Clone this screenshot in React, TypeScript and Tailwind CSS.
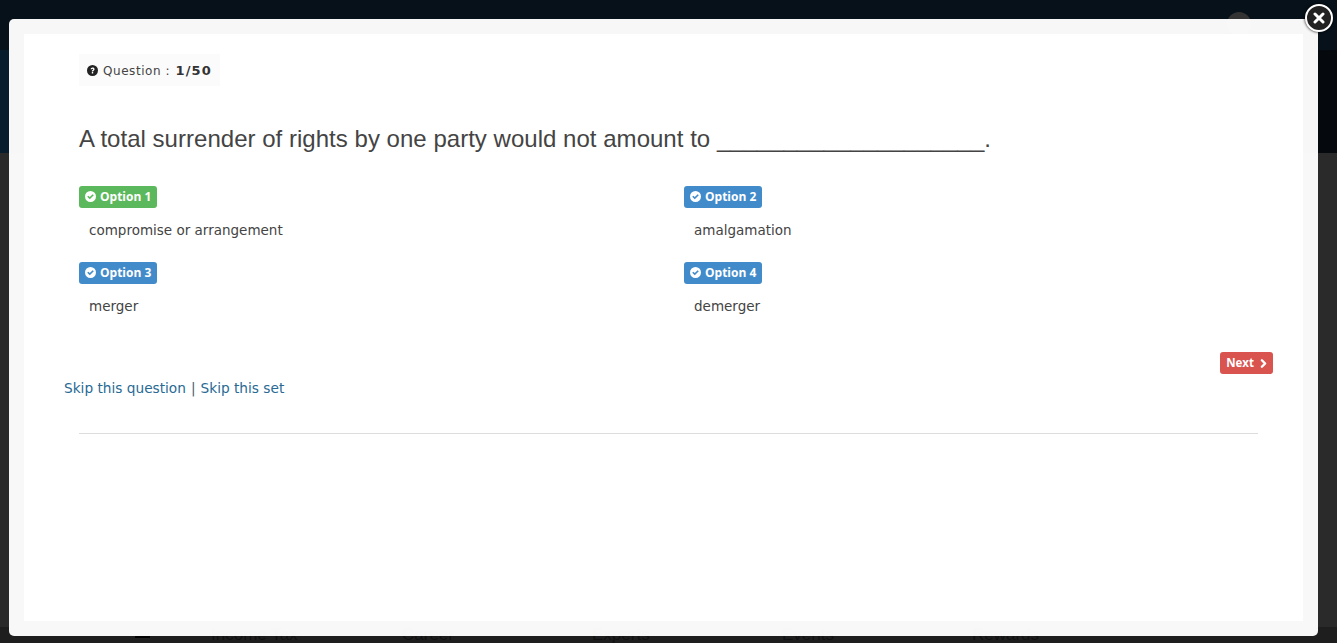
import { ChevronRight } from "lucide-react";

const options = [
  { label: "Option 1", text: "compromise or arrangement", color: "bg-[#5cb85c]" },
  { label: "Option 2", text: "amalgamation", color: "bg-[#428bca]" },
  { label: "Option 3", text: "merger", color: "bg-[#428bca]" },
  { label: "Option 4", text: "demerger", color: "bg-[#428bca]" },
];

const footerLinks = [
  { label: "Income Tax", cls: "w-[191px]" },
  { label: "Career", cls: "w-[190px]" },
  { label: "Experts", cls: "w-[190px]" },
  { label: "Events", cls: "w-[190px]" },
  { label: "Rewards", cls: "" },
];

const CheckIcon = () => (
  <svg viewBox="0 0 24 24" className="w-[11px] h-[11px] shrink-0" fill="#fff">
    <path d="M12 0a12 12 0 1 0 0 24 12 12 0 0 0 0-24zm-1.600 18.200L4.800 12.600l2.500-2.500 3.100 3.100 6.300-6.300 2.500 2.500z" />
  </svg>
);

const App = () => {
  return (
    <div className="relative w-[1337px] h-[643px] overflow-hidden bg-[#2a2a2a] font-['DejaVu_Sans',sans-serif]">
      {/* PAGE BEHIND THE OVERLAY */}
      <div className="h-[50px] bg-[#06111a] flex items-start pt-[12px] pl-[1227px]">
        <div className="w-[24px] h-[24px] rounded-full bg-[#333]" />
      </div>
      <div className="h-[103px] bg-linear-to-r from-[#071c2c] to-[#05090e]" />
      <div className="h-[474px] bg-[#2a2a2a]" />
      <div className="h-[16px] bg-[#1e1e1e] flex items-center pl-[135px] text-[#111] text-[17px] font-['Liberation_Sans',sans-serif]">
        <div className="w-[15px] h-[4px] mt-[2px] mr-[61px] bg-black" />
        {footerLinks.map((l) => (
          <span key={l.label} className={l.cls}>{l.label}</span>
        ))}
      </div>

      {/* MODAL */}
      <div className="absolute left-[9px] top-[19px] w-[1309px] h-[617px] rounded-[5px] bg-white/[0.97] p-[15px]">
        <div className="h-full bg-white pt-[20px] text-[#444]">
          <div className="px-[55px]">
            <div className="inline-flex items-center gap-[5px] h-[32px] w-[141px] pl-[8px] pt-[1px] bg-[#fbfbfb] text-[12px] tracking-[0.55px] text-[#444]">
              <svg viewBox="0 0 24 24" className="w-[11px] h-[11px]" fill="#222">
                <circle cx="12" cy="12" r="12" />
                <path d="M8 9.500C8 7 9.800 5.500 12.200 5.500S16.500 7 16.500 9.200c0 3-3 3-3 5h-3c0-3.500 3-3.500 3-5 0-.8-.6-1.200-1.300-1.200-.8 0-1.300.5-1.400 1.500zM10.500 15.500h3v3h-3z" fill="#fff" />
              </svg>
              <span>Question : <b className="ml-[1px] font-bold text-[13px] tracking-[1.2px] text-[#333]">1/50</b></span>
            </div>
            <h1 className="mt-[36px] text-[24px] leading-[34px] tracking-[0.025px] font-['Liberation_Sans',sans-serif] whitespace-nowrap">
              A total surrender of rights by one party would not amount to ____________________.
            </h1>
            <div className="grid grid-cols-[605px_1fr] mt-[29px] gap-y-[21px]">
              {options.map((o) => (
                <div key={o.label}>
                  <div className={`inline-flex items-center gap-[4px] h-[22px] px-[6px] rounded-[3px] text-white text-[12px] font-bold font-['Open_Sans',sans-serif] ${o.color}`}>
                    <CheckIcon />
                    <span>{o.label}</span>
                  </div>
                  <p className="mt-[11px] pl-[10px] text-[13.500px] leading-[20px]">{o.text}</p>
                </div>
              ))}
            </div>
          </div>

          <div className="flex justify-end pr-[30px] mt-[36px]">
            <div className="inline-flex items-center gap-[3px] h-[22px] pl-[6px] pr-[3px] rounded-[3px] bg-[#d9534f] text-white text-[11.500px] font-bold font-['Open_Sans',sans-serif]">
              Next
              <ChevronRight size={13} strokeWidth={4.500} />
            </div>
          </div>
          <div className="flex gap-[5px] pl-[40px] mt-[4px] text-[13.700px] leading-[20px] text-[#4a5f70]">
            <a className="text-[#286a94]">Skip this question</a>
            <span>|</span>
            <a className="text-[#286a94]">Skip this set</a>
          </div>
          <hr className="ml-[55px] mr-[45px] mt-[35px] border-t border-[#ddd]" />
        </div>
      </div>

      {/* CLOSE BUTTON */}
      <div className="absolute left-[1305px] top-[4px] w-[28px] h-[28px] rounded-full bg-[#222] border-2 border-white shadow-[0_0_3px_#000] flex items-center justify-center">
        <svg viewBox="0 0 12 12" className="w-[12px] h-[12px]" stroke="#fff" strokeWidth="3" strokeLinecap="round">
          <path d="M2 2l8 8M10 2l-8 8" />
        </svg>
      </div>
    </div>
  );
};

export default App;
